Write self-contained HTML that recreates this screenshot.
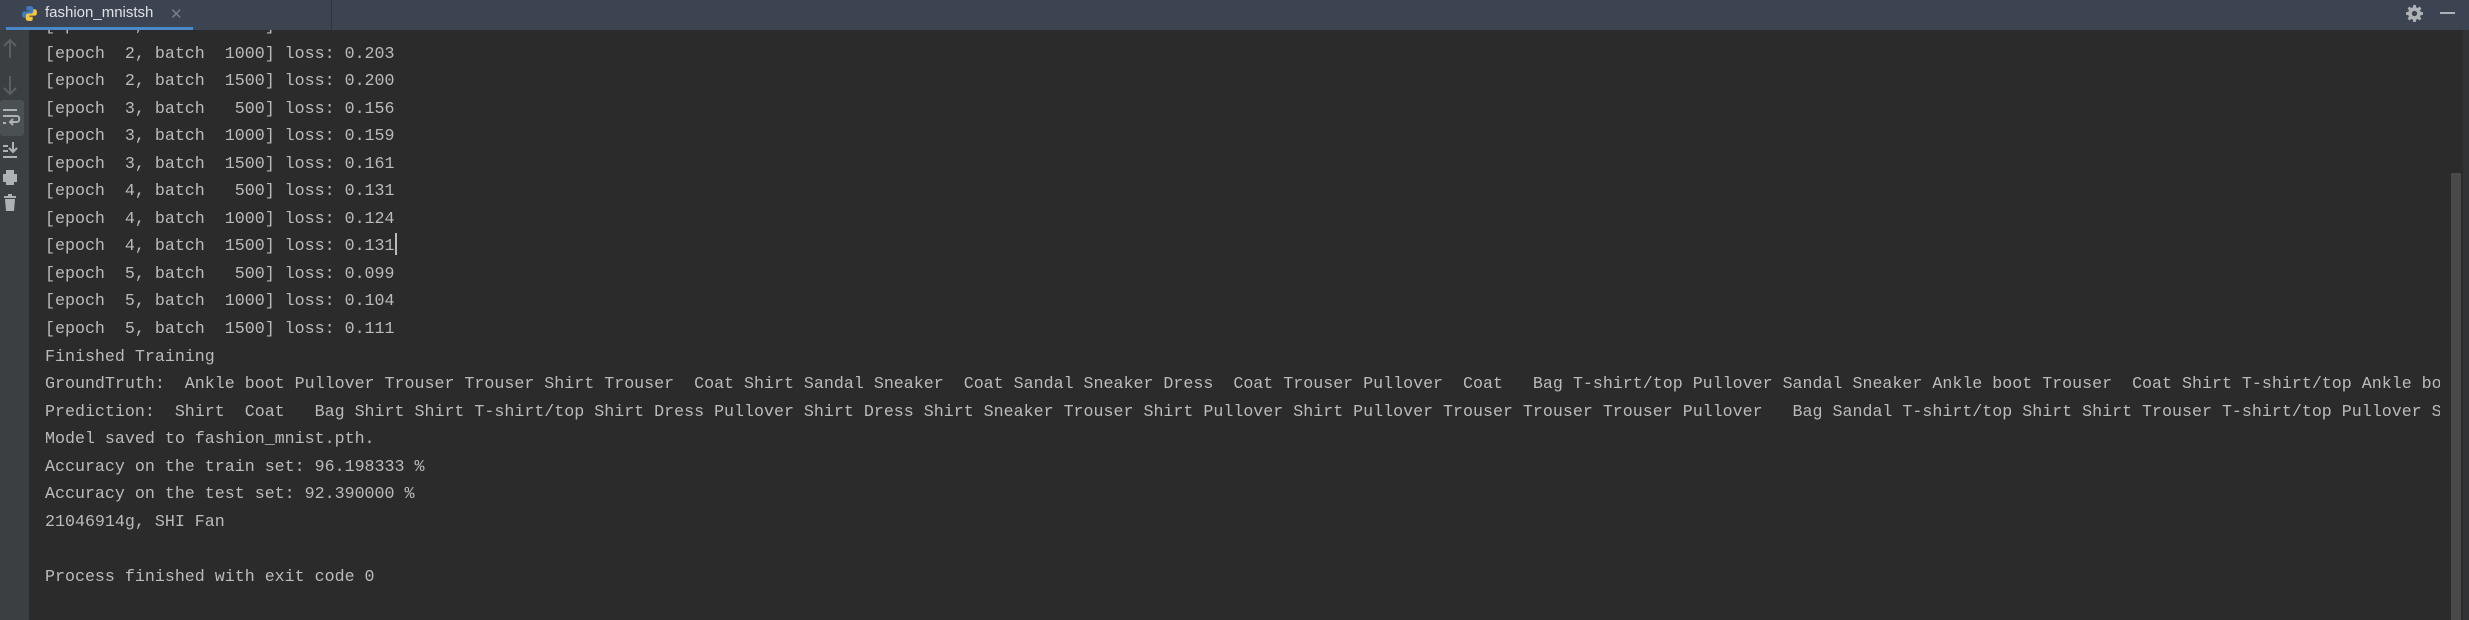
<!DOCTYPE html>
<html><head><meta charset="utf-8"><style>
html,body{margin:0;padding:0;}
body{width:2469px;height:620px;background:#2b2b2b;position:relative;overflow:hidden;font-family:"Liberation Mono",monospace;}
#tabs{position:absolute;left:0;top:0;width:2469px;height:30px;background:#3c4452;z-index:2;}
#tabs .sep{position:absolute;left:331px;top:0;width:1px;height:30px;background:#2f353f;}
#tabs .ul{position:absolute;left:6px;top:27px;width:187px;height:3px;background:#4a88c7;}
#tabs .t{position:absolute;left:45px;top:4px;font:15px "Liberation Sans",sans-serif;color:#dfe1e5;}
#tabs .x{position:absolute;left:170px;top:5px;font:15px "Liberation Sans",sans-serif;color:#7a7f87;}
#gut{position:absolute;left:0;top:30px;width:29px;height:590px;background:#3c3f41;}
#out{position:absolute;left:45px;top:12px;width:2395px;overflow:hidden;white-space:pre;font-size:16.65px;line-height:27.55px;color:#bbbbbb;}
#sb{position:absolute;left:2451px;top:173px;width:10px;height:447px;background:#4a4a4a;}
#rs{position:absolute;left:2463px;top:30px;width:6px;height:590px;background:#313335;}
</style></head><body>
<div id="out">[epoch  2, batch   500] loss: 0.212
[epoch  2, batch  1000] loss: 0.203
[epoch  2, batch  1500] loss: 0.200
[epoch  3, batch   500] loss: 0.156
[epoch  3, batch  1000] loss: 0.159
[epoch  3, batch  1500] loss: 0.161
[epoch  4, batch   500] loss: 0.131
[epoch  4, batch  1000] loss: 0.124
[epoch  4, batch  1500] loss: 0.131<span style="display:inline-block;width:2px;height:22px;background:#bbb;vertical-align:-5px"></span>
[epoch  5, batch   500] loss: 0.099
[epoch  5, batch  1000] loss: 0.104
[epoch  5, batch  1500] loss: 0.111
Finished Training
GroundTruth:  Ankle boot Pullover Trouser Trouser Shirt Trouser  Coat Shirt Sandal Sneaker  Coat Sandal Sneaker Dress  Coat Trouser Pullover  Coat   Bag T-shirt/top Pullover Sandal Sneaker Ankle boot Trouser  Coat Shirt T-shirt/top Ankle boot
Prediction:  Shirt  Coat   Bag Shirt Shirt T-shirt/top Shirt Dress Pullover Shirt Dress Shirt Sneaker Trouser Shirt Pullover Shirt Pullover Trouser Trouser Trouser Pullover   Bag Sandal T-shirt/top Shirt Shirt Trouser T-shirt/top Pullover Sneaker
Model saved to fashion_mnist.pth.
Accuracy on the train set: 96.198333 %
Accuracy on the test set: 92.390000 %
21046914g, SHI Fan

Process finished with exit code 0</div>
<div id="tabs">
<svg style="position:absolute;left:21px;top:5px" width="17" height="17" viewBox="0 0 16 16"><path d="M8 1C5 1 5 2 5 3v2h3v1H3C1.5 6 1 7.5 1 9s.5 3 2 3h1.5V10c0-1 1-2 2-2h3c1 0 2-1 2-2V3c0-1-1-2-3.5-2z" fill="#3f7cc0"/><path d="M8 15c3 0 3-1 3-2v-2H8v-1h5c1.5 0 2-1.5 2-3s-.5-3-2-3h-1.5V6c0 1-1 2-2 2h-3c-1 0-2 1-2 2v3c0 1 1 2 3.5 2z" fill="#f2c640"/></svg>
<div class="t">fashion_mnistsh</div><div class="x">✕</div>
<div class="sep"></div><div class="ul"></div>
<svg style="position:absolute;left:2406px;top:5px" width="17" height="17" viewBox="0 0 16 16"><path fill="#aeb1b5" d="M6.8 0h2.4l.4 2.2 1.3.6 1.9-1.3 1.7 1.7-1.3 1.9.6 1.3 2.2.4v2.4l-2.2.4-.6 1.3 1.3 1.9-1.7 1.7-1.9-1.3-1.3.6-.4 2.2H6.8l-.4-2.2-1.3-.6-1.9 1.3-1.7-1.7 1.3-1.9-.6-1.3L0 9.2V6.8l2.2-.4.6-1.3-1.3-1.900 1.7-1.7 1.9 1.3 1.3-.6zM8 5.5a2.5 2.5 0 100 5 2.5 2.5 0 000-5z"/></svg>
<div style="position:absolute;left:2440px;top:12px;width:15px;height:2px;background:#aeb1b5"></div>
</div>
<div id="gut">
<svg width="29" height="200" viewBox="0 0 29 200">
<g stroke="#5b5f63" stroke-width="2" fill="none"><path d="M10 28V10M4 16l6-6 6 6"/><path d="M10 46v18M4 58l6 6 6-6"/></g>
<rect x="0" y="70" width="24" height="36" rx="3" fill="#4b5053"/>
<g stroke="#aeb1b5" stroke-width="2" fill="none"><path d="M3 80h14M3 86h14c3 0 3 6 0 6h-6M13 89l-3 3 3 3"/><path d="M3 93h3"/>
<path d="M3 116h5M3 121h5M3 127h14M13 112v10M9 118l4 4 4-4"/></g>
<path d="M6 140h8v4h3v8h-3v3H6v-3H3v-8h3z" fill="#aeb1b5"/>
<path d="M4 166h12v2H4zM8 164h4v2H8zM5 169h10l-1 12H6z" fill="#aeb1b5"/>
</svg>
</div>
<div id="sb"></div><div id="rs"></div>
</body></html>
